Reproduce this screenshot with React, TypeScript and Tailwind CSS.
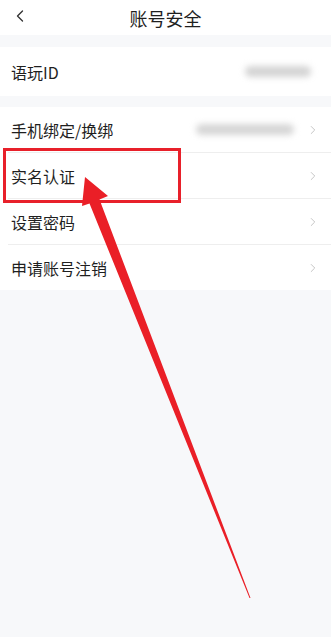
import { ChevronLeft, ChevronRight } from 'lucide-react';

const font = { fontFamily: '"Noto Sans CJK SC", "Noto Sans", sans-serif' };

interface Row {
  label: string;
  blur?: string;
}

const rows: Row[] = [
  { label: '手机绑定/换绑', blur: 'w-[98px]' },
  { label: '实名认证' },
  { label: '设置密码' },
  { label: '申请账号注销' },
];

export default function App() {
  return (
    <div className="relative w-[331px] h-[637px] overflow-hidden bg-[#f7f8fa] text-[#1f1f1f]" style={font}>
      {/* 顶部导航 */}
      <div className="relative flex items-center justify-center h-[35px] bg-white">
        <ChevronLeft className="absolute left-[10px] top-[6px] w-[20px] h-[20px] text-[#333]" strokeWidth={1.6} />
        <span className="text-[18px] leading-none">账号安全</span>
      </div>

      <div className="h-[12px]" />

      <div className="flex items-center justify-between h-[49px] bg-white pl-[11px] pr-[20px]">
        <span className="text-[16px]">语玩ID</span>
        <div className="w-[66px] h-[11px] rounded-full bg-[#d4d4d4] blur-[3px]" />
      </div>

      <div className="h-[11px]" />

      <div className="bg-white">
        {rows.map((r, i) => (
          <div key={r.label} className="flex flex-col">
            <div className="flex items-center justify-between h-[45px] pl-[11px] pr-[11px]">
              <span className="text-[16px]">{r.label}</span>
              <div className="flex items-center gap-[12px]">
                {r.blur && <div className={`${r.blur} h-[11px] rounded-full bg-[#d6d6d6] blur-[3px]`} />}
                <ChevronRight className="w-[14px] h-[14px] text-[#bdbdbd]" strokeWidth={1.5} />
              </div>
            </div>
            {i < rows.length - 1 && <div className="ml-[8px] h-px bg-[#eeeeee]" />}
          </div>
        ))}
      </div>

      {/* 标注框 */}
      <div className="absolute left-[3px] top-[148px] w-[178px] h-[55px] border-[3px] border-[#e8202a]" />

      {/* 标注箭头 */}
      <svg className="absolute inset-0 pointer-events-none" width={331} height={637} viewBox="0 0 331 637">
        <polygon
          fill="#ea1f27"
          points="85,177 108,196 99.5,199.5 250.5,598 249.5,598 89.5,203.5 82,206"
        />
      </svg>
    </div>
  );
}
